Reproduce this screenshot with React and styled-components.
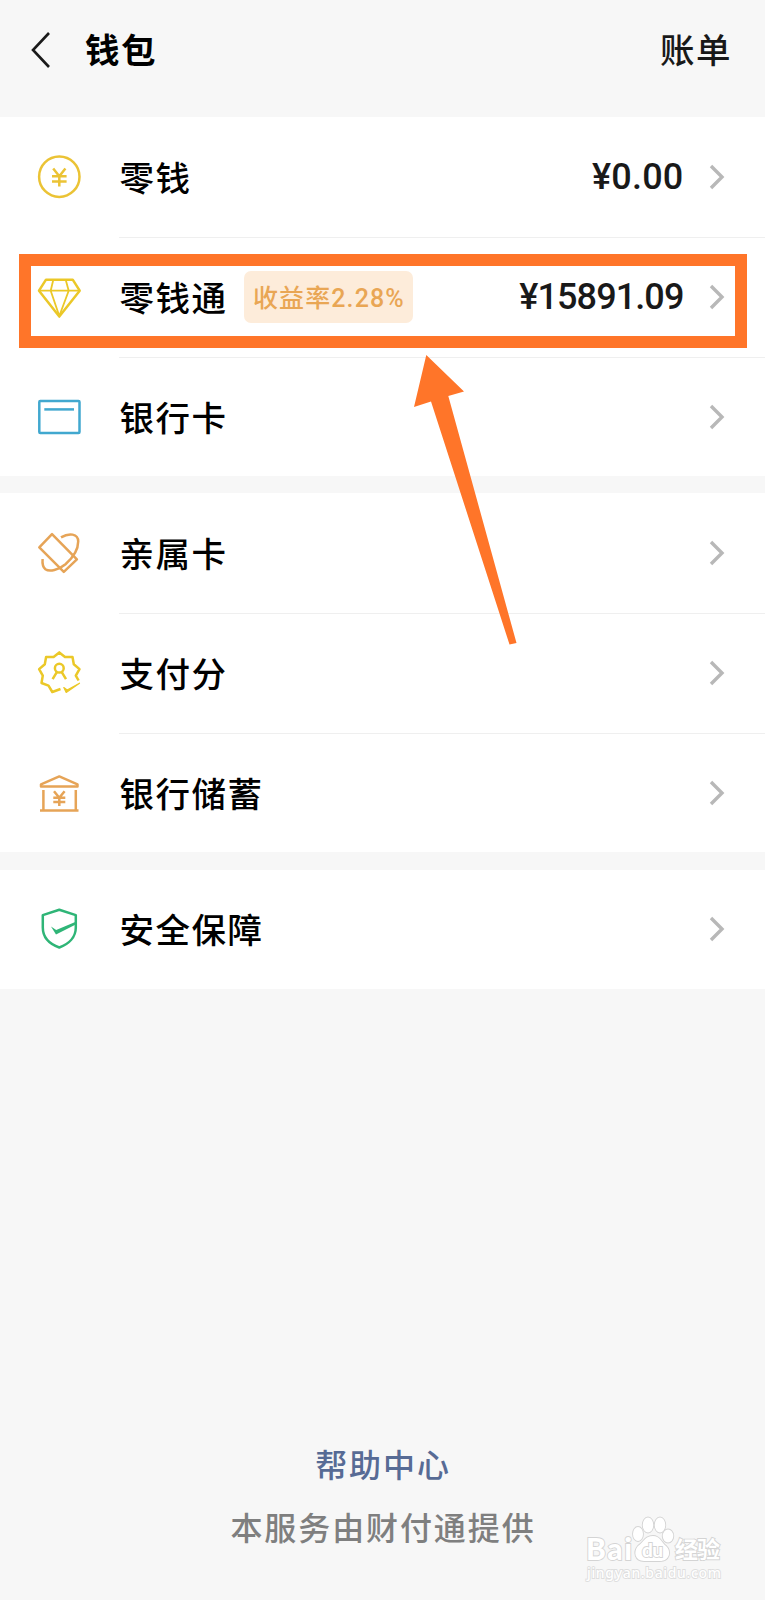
import React from "react";
import styled, { createGlobalStyle } from "styled-components";

const groups = [
  [
    { icon: "coin", label: "零钱", amount: "¥0.00", tracking: 0.2 },
    {
      icon: "diamond",
      label: "零钱通",
      badge: "收益率2.28%",
      amount: "¥15891.09",
      tracking: -0.9,
    },
    { icon: "card", label: "银行卡" },
  ],
  [
    { icon: "family", label: "亲属卡" },
    { icon: "score", label: "支付分" },
    { icon: "bank", label: "银行储蓄" },
  ],
  [{ icon: "shield", label: "安全保障" }],
];

const icons = {
  coin: (
    <Icon48 color="#ebc335">
      <circle cx="24.3" cy="23.7" r="20.2" />
      <path d="M18.2 15.5 24.3 23.2 30.4 15.5M24.3 23V33.5M17 23.2H31.6M17 28.6H31.6" />
    </Icon48>
  ),
  diamond: (
    <Icon48 color="#ebc828">
      <path d="M11 6.7H37.7L44.7 17.7 24.3 43.6 4 17.7Z" />
      <path
        strokeWidth="1.8"
        d="M4 17.7H44.7M18.3 6.7 15.7 17.7 24.3 43M30.7 6.7 33.7 17.7 24.3 43"
      />
    </Icon48>
  ),
  card: (
    <Icon48 color="#41a8cf">
      <rect x="4.3" y="8.9" width="40.2" height="32" rx="1" />
      <path d="M9.3 17.4H39" />
    </Icon48>
  ),
  family: (
    <Icon48 color="#e6a457">
      <path d="M17 5.2 4.3 18.4 28.8 42.9 41.9 30.4Z" />
      <path d="M26 8.4C34 3.6 43.2 4.4 43.2 12.5C43.2 21 37 29.5 30.5 35.2C23.5 41 14.5 43 10.4 40.2C7.6 38 7.2 34.5 7.6 30" />
    </Icon48>
  ),
  score: (
    <Icon48 color="#ebc828">
      <path d="M43.6 31.5 40.8 26.6 44.5 20.1 38.8 15.3 37.5 8 30 7.9 24.3 3.4 18.6 7.9 11.1 8 9.8 15.3 4.1 20.1 7.8 26.6 6.5 34 13.5 36.6 17.3 43 25.5 40" />
      <circle cx="24.3" cy="19.2" r="4.4" />
      <path d="M22 22.8 17.6 30.2M26.6 22.8 31 30.2" />
      <path fill="currentColor" strokeWidth="1.2" d="M28.8 38.6 32.2 41 44.5 34.2 31.2 43.4Z" />
    </Icon48>
  ),
  bank: (
    <Icon48 color="#e6a457">
      <path d="M24.3 7.4 42.5 15.3V17.6H6V15.3Z" />
      <path d="M8.4 21V41M40.8 21V41M5 41.6H43.5" />
      <path d="M19 22.2 24.3 28.8 29.6 22.2M24.3 28.8V37M18.3 28.8H30.3M18.3 33H30.3" />
    </Icon48>
  ),
  shield: (
    <Icon48 color="#2fb577">
      <path d="M24.3 4.7 40.8 10.1V22.5C40.8 32 34 39 24.3 42.5C14.5 39 7.8 32 7.8 22.5V10.1Z" />
      <path fill="currentColor" stroke="none" d="M16 21.6 21.2 25 40.8 16.8V19.4L21 29.4Z" />
    </Icon48>
  ),
};

function Icon48({ color, children }) {
  return (
    <RowIcon viewBox="0 0 48 48" $color={color}>
      {children}
    </RowIcon>
  );
}

const Row = ({ icon, label, badge, amount, tracking }) => (
  <RowContainer>
    {icons[icon]}
    <RowBody>
      <Label>{label}</Label>
      {badge && <Badge>{badge}</Badge>}
      {amount && <Amount $tracking={tracking}>{amount}</Amount>}
      <Chevron viewBox="0 0 16 26">
        <path d="M2 2 13 13 2 24" />
      </Chevron>
    </RowBody>
  </RowContainer>
);

const App = () => {
  return (
    <Page>
      <GlobalStyle />
      <Header>
        <BackIcon viewBox="0 0 20 38">
          <path d="M18 2 2 19 18 36" />
        </BackIcon>
        <Title>钱包</Title>
        <Bill>账单</Bill>
      </Header>

      <Groups>
        {groups.map((rows) => (
          <Group key={rows[0].label}>
            {rows.map((row) => (
              <Row key={row.label} {...row} />
            ))}
          </Group>
        ))}
      </Groups>

      <Footer>
        <HelpLink>帮助中心</HelpLink>
        <Provider>本服务由财付通提供</Provider>
      </Footer>

      <Highlight />
      <Arrow viewBox="0 0 51 290">
        <path d="M12.3 0 50 36.5 34.3 41 102.5 288 95.5 289.5 17 46.5 0 52Z" />
      </Arrow>
      <Watermark viewBox="0 0 150 76">
        <text x="6" y="45" fontSize="30" textLength="46" className="latin">
          Bai
        </text>
        <ellipse cx="58" cy="19" rx="5" ry="7" />
        <ellipse cx="68" cy="10" rx="5.3" ry="7.5" />
        <ellipse cx="80" cy="10" rx="5.3" ry="7.5" />
        <ellipse cx="88" cy="21" rx="5.3" ry="6.5" />
        <path d="M73 21C80 21 81 27 86 31C92 37 89 46 80 46H64C55 46 53 37 58 31C64 27 65 21 73 21Z" />
        <text x="62" y="42" fontSize="19" textLength="21" className="latin">
          du
        </text>
        <text x="95" y="42.5" fontSize="23" textLength="45">
          经验
        </text>
        <text x="7" y="63" fontSize="14" textLength="134" className="url">
          jingyan.baidu.com
        </text>
      </Watermark>
    </Page>
  );
};

export default App;

const GlobalStyle = createGlobalStyle`
  body {
    margin: 0;
    background: #f7f7f7;
  }
`;

const Page = styled.div`
  position: relative;
  display: flex;
  flex-direction: column;
  width: 765px;
  height: 1600px;
  overflow: hidden;
  background: #f7f7f7;
  color: #000;
  font-family: "Noto Sans CJK SC", sans-serif;
`;

const Header = styled.div`
  display: flex;
  align-items: center;
  box-sizing: border-box;
  height: 117.3px;
  padding: 0 33px 18px 31px;
  font-size: 34.5px;
  letter-spacing: 1.5px;
`;

const BackIcon = styled.svg`
  width: 20px;
  height: 38px;
  fill: none;
  stroke: #1a1a1a;
  stroke-width: 2.6;
`;

const Title = styled.div`
  margin-left: 34px;
  padding-bottom: 4px;
  font-weight: 700;
`;

const Bill = styled.div`
  margin-left: auto;
  padding-bottom: 3px;
  color: #191919;
  font-weight: 500;
`;

const Groups = styled.div`
  display: flex;
  flex-direction: column;
  gap: 17.2px;
`;

const Group = styled.div`
  background: #fff;
`;

const RowContainer = styled.div`
  display: flex;
  align-items: center;
  box-sizing: border-box;
  height: 119.65px;
  padding-left: 35px;
`;

const RowIcon = styled.svg`
  flex: none;
  width: 48px;
  height: 48px;
  color: ${({ $color }) => $color};
  fill: none;
  stroke: currentColor;
  stroke-width: 2.5;
  stroke-linejoin: round;
`;

const RowBody = styled.div`
  display: flex;
  flex: 1;
  align-items: center;
  box-sizing: border-box;
  height: 100%;
  margin-left: 36px;
  padding-right: 40px;

  ${RowContainer}:not(:first-child) & {
    border-top: 1px solid #efefef;
  }
`;

const Label = styled.div`
  padding: 0 0 2px 0.5px;
  font-size: 34.5px;
  font-weight: 500;
  letter-spacing: 1.5px;
`;

const Badge = styled.div`
  box-sizing: border-box;
  width: 169px;
  height: 52px;
  margin-left: 16.5px;
  padding-left: 9px;
  border-radius: 7px;
  background: #fdecda;
  color: #e9a654;
  font-family: Roboto, "Noto Sans CJK SC", sans-serif;
  font-size: 25px;
  font-weight: 500;
  letter-spacing: 1.1px;
  line-height: 55px;
  white-space: nowrap;
`;

const Amount = styled.div`
  margin-left: auto;
  color: #191919;
  font-family: Roboto, sans-serif;
  font-size: 36px;
  font-weight: 500;
  letter-spacing: ${({ $tracking }) => $tracking}px;
`;

const Chevron = styled.svg`
  width: 16px;
  height: 26px;
  margin-left: auto;
  fill: none;
  stroke: #b8b8b8;
  stroke-width: 3.4;

  ${Amount} + & {
    margin-left: 25.5px;
  }
`;

const Footer = styled.div`
  display: flex;
  flex-direction: column;
  align-items: center;
  gap: 16px;
  margin-top: auto;
  padding: 0 0 50px 1px;
  font-size: 32px;
  font-weight: 500;
  letter-spacing: 1.9px;
  line-height: 47px;
`;

const HelpLink = styled.div`
  color: #576b95;
`;

const Provider = styled.div`
  color: #7f7f7f;
`;

const Highlight = styled.div`
  position: absolute;
  top: 253.5px;
  left: 19.3px;
  box-sizing: border-box;
  width: 728px;
  height: 94px;
  border: 12px solid #ff7529;
`;

const Arrow = styled.svg`
  position: absolute;
  top: 355px;
  left: 414px;
  width: 51px;
  height: 290px;
  overflow: visible;
  fill: #ff7529;
`;

const Watermark = styled.svg`
  position: absolute;
  top: 1515px;
  left: 580px;
  width: 150px;
  height: 76px;
  overflow: visible;
  fill: #fff;
  stroke: #d4d4d4;
  stroke-width: 1.8;
  font-weight: 700;
  paint-order: stroke;

  .latin {
    font-family: Lato, sans-serif;
    font-weight: 900;
  }

  .url {
    font-family: "Noto Sans", sans-serif;
    font-weight: 500;
    stroke: #dedede;
  }
`;
